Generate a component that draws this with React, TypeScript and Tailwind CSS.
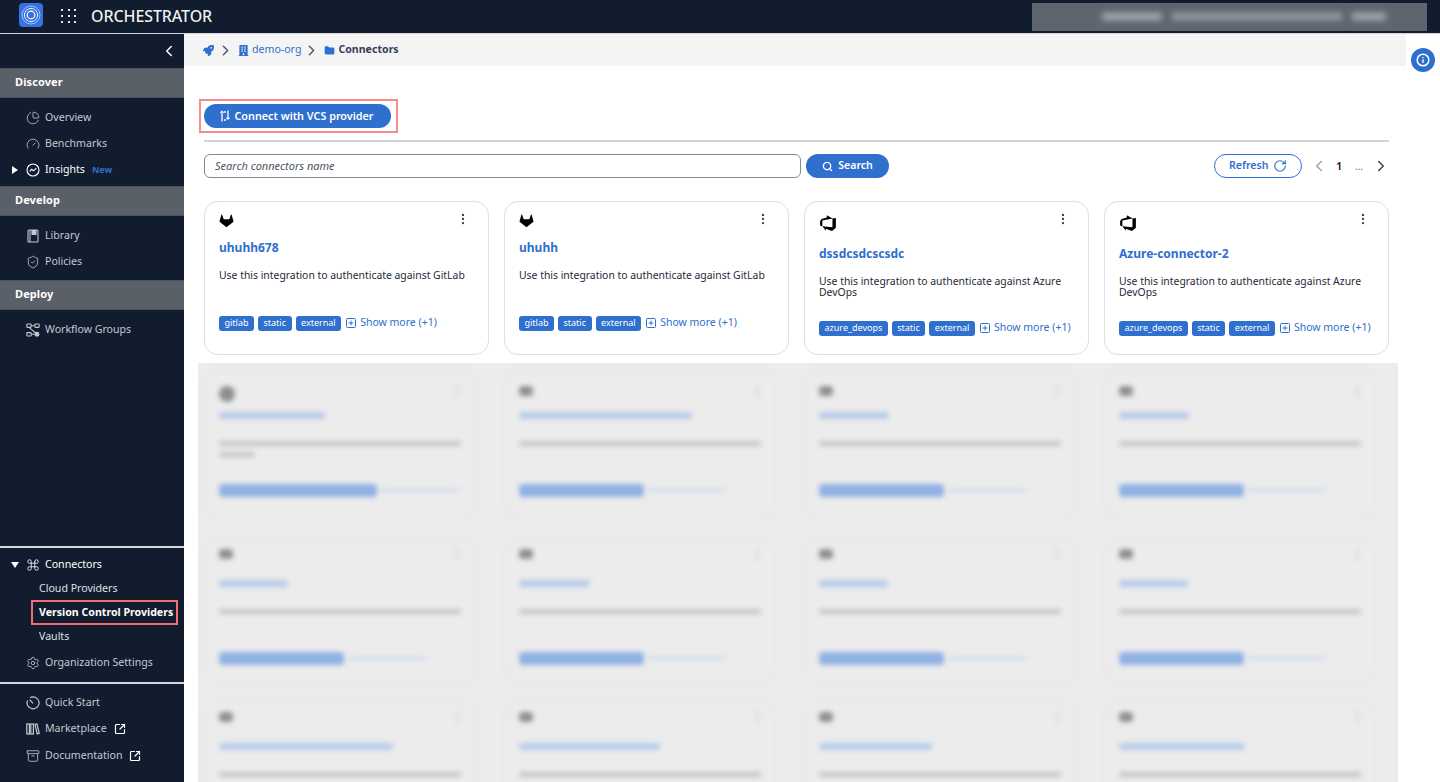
import type { ReactNode } from 'react'
import {
  Archive,
  ChartPie,
  ChevronLeft,
  ChevronRight,
  Command,
  EllipsisVertical,
  Folder,
  Gauge,
  Info,
  RotateCw,
  Search,
  Settings,
  ShieldCheck,
  SquareArrowOutUpRight,
  SquarePlus,
} from 'lucide-react'
import { FaBuilding, FaRocket } from 'react-icons/fa'
import { VscAzureDevops } from 'react-icons/vsc'

const BLUE = 'text-[#2f6fce]'

function Logo() {
  return (
    <div className="-mt-[3px] flex h-6 w-6 items-center justify-center rounded bg-[#3572e0]">
      <svg viewBox="0 0 24 24" className="h-6 w-6" fill="none" stroke="white">
        <circle cx="12" cy="12" r="9" strokeWidth="0.7" opacity="0.8" />
        <circle cx="12" cy="12" r="6.6" strokeWidth="0.9" />
        <circle cx="12" cy="12" r="3.8" strokeWidth="1.2" />
      </svg>
    </div>
  )
}

function GridDots() {
  return (
    <div className="-mt-[2px] grid w-[16px] grid-cols-3 gap-[4px]">
      {Array.from({ length: 9 }).map((_, i) => (
        <span key={i} className="h-[2px] w-[2px] bg-white/90" />
      ))}
    </div>
  )
}

// icons the packages don't have in this shape
function InsightsIcon() {
  return (
    <svg viewBox="0 0 14 14" className="h-[14px] w-[14px]" fill="none" stroke="currentColor" strokeWidth="1.1">
      <circle cx="7" cy="7" r="6" />
      <path d="M3.6 8.4 5.6 6.3 7.6 7.8 10.4 5.2" />
    </svg>
  )
}

function LibraryIcon() {
  return (
    <svg viewBox="0 0 14 14" className="h-[14px] w-[14px]" fill="none" stroke="currentColor" strokeWidth="1.1">
      <rect x="2" y="1" width="10" height="12" rx="1" />
      <path d="M4 1v12" />
      <path d="M6 1v4.5h4V1" fill="currentColor" />
    </svg>
  )
}

function WorkflowIcon() {
  return (
    <svg viewBox="0 0 14 14" className="h-[14px] w-[14px]" fill="none" stroke="currentColor" strokeWidth="1.1">
      <rect x="0.8" y="1" width="4.4" height="3.4" rx="0.8" />
      <rect x="8.8" y="1" width="4.4" height="3.4" rx="0.8" />
      <rect x="0.8" y="9.6" width="4.4" height="3.4" rx="0.8" />
      <circle cx="11" cy="11.3" r="1.9" fill="currentColor" />
      <path d="M5.2 2.7h3.6M3 4.4l6.6 5.6M5.2 11.3h3.9" />
    </svg>
  )
}

function QuickStartIcon() {
  return (
    <svg viewBox="0 0 14 14" className="h-[14px] w-[14px]" fill="none" stroke="currentColor" strokeWidth="1.2">
      <path d="M4.2 1.6A6 6 0 1 1 1.6 4.4" />
      <path d="M3.6 3.6 7 7.4" />
    </svg>
  )
}

function MarketplaceIcon() {
  return (
    <svg viewBox="0 0 14 14" className="h-[14px] w-[14px]" fill="none" stroke="currentColor" strokeWidth="1.2">
      <rect x="0.8" y="2" width="2.6" height="10" />
      <rect x="4.8" y="2" width="2.6" height="10" />
      <path d="M9 2.4 11 2l2.2 9.4-2 .5z" />
    </svg>
  )
}

function GitlabIcon() {
  return (
    <svg viewBox="0 0 16 15" className="h-[15px] w-[15px]" fill="black">
      <path d="M8 14.6.9 9.2a.8.8 0 0 1-.3-.9L2.5 1.4c.1-.4.6-.4.8 0l1.7 4.8h6l1.7-4.8c.2-.4.7-.4.8 0l1.9 6.9a.8.8 0 0 1-.3.9z" />
    </svg>
  )
}

function VcsIcon() {
  return (
    <svg viewBox="0 0 10 12" className="h-[12px] w-[10px]" fill="none" stroke="currentColor" strokeWidth="1.3">
      <path d="M2 3v8.5M8 .5V9" />
      <path d="M.4 1.9 2 .4l1.6 1.5" transform="translate(0 1)" />
      <path d="M6.4 7.6 8 9.1l1.6-1.5" />
      <path d="M4 2h2M4 10h2" />
    </svg>
  )
}

function TopBar() {
  return (
    <header className="flex h-[33px] items-center bg-[#111c2e] pl-[19px] pr-[13px]">
      <Logo />
      <div className="ml-[18px]">
        <GridDots />
      </div>
      <span className="-mt-[1px] ml-[14px] text-[16px] font-medium tracking-[-0.1px] text-white/95">ORCHESTRATOR</span>
      <div className="ml-auto flex h-[28px] w-[395px] items-center overflow-hidden bg-[#5f656f]">
        <div className="ml-[70px] flex items-center gap-[10px] blur-[3px]">
          <span className="h-[7px] w-[60px] bg-[#a8adb5]" />
          <span className="h-[7px] w-[170px] bg-[#9a9fa8]" />
          <span className="h-[7px] w-[34px] bg-[#a8adb5]" />
        </div>
      </div>
    </header>
  )
}

function SectionHeader({ label }: { label: string }) {
  return (
    <div className="flex h-[30px] items-center border-y border-[#4c525a] bg-[#5a6068] pb-[1px] pl-[15px] text-[11px] font-bold tracking-[0.1px] text-white">
      {label}
    </div>
  )
}

function NavItem({
  icon,
  label,
  trail,
  caret,
  strong,
  tall,
}: {
  icon: ReactNode
  label: string
  trail?: ReactNode
  caret?: 'right' | 'down'
  strong?: boolean
  tall?: boolean
}) {
  return (
    <div
      className={`relative flex items-center gap-[5px] pl-[26px] text-[10.6px] ${tall ? 'h-[27px]' : 'h-[26px]'} ${
        strong ? 'text-white' : 'text-[#c5c9cf]'
      }`}
    >
      {caret === 'right' && (
        <span className="absolute left-[12px] h-0 w-0 border-y-[4px] border-l-[6px] border-y-transparent border-l-white" />
      )}
      {caret === 'down' && (
        <span className="absolute left-[11px] h-0 w-0 border-x-[4px] border-t-[6px] border-x-transparent border-t-white" />
      )}
      <span className="flex w-[14px] shrink-0 justify-center">{icon}</span>
      <span>{label}</span>
      {trail}
    </div>
  )
}

function Sidebar() {
  const icon = { size: 14, strokeWidth: 1.4 }
  const external = <SquareArrowOutUpRight size={12} strokeWidth={2.4} className="ml-[2px] text-white" />
  return (
    <aside className="flex w-[184px] shrink-0 flex-col justify-between bg-[#111c2e]">
      <div>
        <div className="flex h-[34px] items-center justify-end pr-[6px]">
          <ChevronLeft size={18} className="text-white" />
        </div>
        <SectionHeader label="Discover" />
        <div className="pb-[3px] pt-[7px]">
          <NavItem icon={<ChartPie {...icon} />} label="Overview" />
          <NavItem icon={<Gauge {...icon} />} label="Benchmarks" />
          <NavItem
            icon={<InsightsIcon />}
            label="Insights"
            caret="right"
            strong
            trail={<span className="ml-[2px] text-[9px] font-bold text-[#2f6fce]">New</span>}
          />
        </div>
        <SectionHeader label="Develop" />
        <div className="pb-[5px] pt-[7px]">
          <NavItem icon={<LibraryIcon />} label="Library" />
          <NavItem icon={<ShieldCheck {...icon} />} label="Policies" />
        </div>
        <SectionHeader label="Deploy" />
        <div className="pt-[7px]">
          <NavItem icon={<WorkflowIcon />} label="Workflow Groups" />
        </div>
      </div>
      <div>
        <div className="border-t-2 border-[#d5d7da] pb-[6px] pt-[4px]">
          <NavItem icon={<Command {...icon} />} label="Connectors" caret="down" strong />
          <div className="ml-[31px] mr-[6px] flex flex-col text-[10.6px] text-[#dfe1e4]">
            <span className="flex h-[22px] items-center pl-[8px]">Cloud Providers</span>
            <span className="flex h-[25px] items-center whitespace-nowrap border-2 border-[#f26d75] pl-[6px] font-bold text-white">
              Version Control Providers
            </span>
            <span className="flex h-[23px] items-center pl-[8px]">Vaults</span>
          </div>
          <div className="mt-[2px]">
            <NavItem icon={<Settings {...icon} />} label="Organization Settings" />
          </div>
        </div>
        <div className="border-t-2 border-[#d5d7da] pb-[13px] pt-[6px]">
          <NavItem icon={<QuickStartIcon />} label="Quick Start" />
          <NavItem icon={<MarketplaceIcon />} label="Marketplace" trail={external} />
          <NavItem icon={<Archive {...icon} />} label="Documentation" trail={external} tall />
        </div>
      </div>
    </aside>
  )
}

function Breadcrumb() {
  return (
    <nav className="flex h-[32px] shrink-0 items-center bg-[#f4f4f4] pl-[19px] text-[10.6px]">
      <FaRocket size={11} className={BLUE} />
      <ChevronRight size={17} className="ml-[3px] text-[#4b5563]" />
      <FaBuilding size={11} className={`ml-[4px] ${BLUE}`} />
      <span className={`ml-[3px] ${BLUE}`}>demo-org</span>
      <ChevronRight size={17} className="ml-[2px] text-[#4b5563]" />
      <Folder size={11} fill="#2f6fce" strokeWidth={1} className={`ml-[4px] ${BLUE}`} />
      <span className="ml-[3px] font-bold text-[#374151]">Connectors</span>
    </nav>
  )
}

function Toolbar() {
  return (
    <div className="flex items-center">
      <div className="flex h-[24px] w-[597px] items-center rounded-[6px] border-[1.5px] border-[#7f8c9f] pl-[10px] text-[11px] italic text-[#4b5563]">
        Search connectors name
      </div>
      <button className="ml-[5px] flex h-[24px] w-[83px] items-center justify-center gap-[5px] rounded-full bg-[#2f6fce] text-[10.6px] font-semibold text-white">
        <Search size={11} strokeWidth={3} />
        Search
      </button>
      <button className={`ml-auto flex h-[24px] w-[88px] items-center justify-center gap-[5px] rounded-full border-[1.5px] border-[#2f6fce] text-[10.6px] font-semibold ${BLUE}`}>
        Refresh
        <RotateCw size={14} />
      </button>
      <div className="-mr-[1px] ml-[8px] flex items-center">
        <ChevronLeft size={18} className="text-[#9ca3af]" />
        <span className="ml-[8px] text-[10px] font-bold text-[#1f2937]">1</span>
        <span className="ml-[13px] text-[10px] text-[#6b7280]">...</span>
        <ChevronRight size={18} className="ml-[9px] text-[#374151]" />
      </div>
    </div>
  )
}

function Tag({ label }: { label: string }) {
  return <span className="flex h-[15px] items-center rounded-[3px] bg-[#2f6fce] px-[5.5px] text-[9px] text-white">{label}</span>
}

function ConnectorCard({ name, text, kind }: { name: string; text: string; kind: 'gitlab' | 'azure' }) {
  const azure = kind === 'azure'
  return (
    <div className="relative flex h-[154px] flex-col rounded-[14px] border border-[#dcdfe4] bg-white pl-[14px] pr-[12px]">
      <div className={azure ? 'mt-[12px] h-[20px]' : 'mt-[11px] h-[15px]'}>
        {azure ? <VscAzureDevops size={18} className="text-black" /> : <GitlabIcon />}
      </div>
      <EllipsisVertical size={14} className="absolute right-[18px] top-[10px] text-[#374151]" />
      <div className={`mt-[12px] text-[12px] font-bold leading-[16px] ${BLUE}`}>{name}</div>
      <p className="mt-[14px] text-[10.4px] leading-[11px] text-[#1f2937]">{text}</p>
      <div className={`absolute left-[14px] flex items-center gap-[4px] ${azure ? 'bottom-[18px]' : 'bottom-[23px]'}`}>
        <Tag label={azure ? 'azure_devops' : 'gitlab'} />
        <Tag label="static" />
        <Tag label="external" />
        <SquarePlus size={12} className={BLUE} />
        <span className={`-ml-[1px] text-[10.5px] ${BLUE}`}>Show more (+1)</span>
      </div>
    </div>
  )
}

type Blurred = { title: number; tags?: number; round?: boolean; lines?: number }

const blurredRows: Blurred[][] = [
  [{ title: 106, tags: 158, round: true, lines: 2 }, { title: 173 }, { title: 70 }, { title: 70 }],
  [{ title: 69 }, { title: 71 }, { title: 69 }, { title: 69 }],
  [{ title: 174 }, { title: 141 }, { title: 113 }, { title: 126 }],
]

function BlurredCard({ card, low }: { card: Blurred; low: boolean }) {
  return (
    <div className="relative h-[163px] blur-[2.5px]">
      <div className={`absolute inset-x-[6px] bottom-[6px] rounded-[14px] border border-[#e4e4e4] ${low ? 'top-[12px]' : 'top-[6px]'}`} />
      <div className={`absolute left-[21px] top-[23px] ${card.round ? 'h-[16px] w-[16px] rounded-full' : 'h-[10px] w-[14px] rounded-sm'} bg-[#8d8f92]`} />
      <div className="absolute right-[24px] top-[22px] h-[12px] w-[3px] bg-[#dcdcdc]" />
      <div
        className={`absolute left-[21px] h-[7px] rounded-sm bg-[#b7cbe9] ${low ? 'top-[54px]' : 'top-[49px]'}`}
        style={{ width: card.title }}
      />
      <div className={`absolute left-[21px] h-[5px] w-[242px] rounded-sm bg-[#c4c5c7] ${low ? 'top-[83px]' : 'top-[78px]'}`} />
      {card.lines === 2 && <div className="absolute left-[21px] top-[89px] h-[5px] w-[36px] rounded-sm bg-[#c4c5c7]" />}
      <div
        className={`absolute left-[21px] h-[13px] rounded-sm bg-[#8fb0e3] ${low ? 'top-[126px]' : 'top-[121px]'}`}
        style={{ width: card.tags ?? 125 }}
      />
      <div
        className={`absolute h-[4px] w-[78px] rounded-sm bg-[#d2dced] ${low ? 'top-[130px]' : 'top-[125px]'}`}
        style={{ left: 25 + (card.tags ?? 125) }}
      />
    </div>
  )
}

function BlurredGrid() {
  return (
    <div className="absolute bottom-0 left-[14px] top-[329px] w-[1200px] overflow-hidden bg-[#ececec]">
      <div className="grid grid-cols-4 gap-x-[15px] pr-[15px]">
        {blurredRows.map((row, r) =>
          row.map((card, c) => <BlurredCard key={`${r}-${c}`} card={card} low={r > 0} />),
        )}
      </div>
    </div>
  )
}

export default function App() {
  return (
    <div className="flex h-[782px] w-[1440px] flex-col overflow-hidden bg-white font-['Noto_Sans','Open_Sans',sans-serif]">
      <TopBar />
      <div className="flex min-h-0 flex-1 border-t border-[#d5d7da]">
        <Sidebar />
        <main className="relative flex w-[1222px] shrink-0 flex-col bg-white">
          <Breadcrumb />
          <div className="flex flex-1 flex-col pl-[20px] pr-[17px]">
            <div className="ml-[-5px] mt-[33px] w-[199px] border-2 border-[#f98b8f] p-[3px]">
              <button className="flex h-[24px] w-[187px] items-center justify-center gap-[4px] rounded-full bg-[#2f6fce] pr-[1px] text-[10.8px] font-semibold text-white">
                <VcsIcon />
                Connect with VCS provider
              </button>
            </div>
            <div className="mt-[7px] border-t-2 border-[#d4d5d7]" />
            <div className="mt-[12px]">
              <Toolbar />
            </div>
            <div className="mt-[23px] grid grid-cols-4 gap-x-[15px]">
              <ConnectorCard kind="gitlab" name="uhuhh678" text="Use this integration to authenticate against GitLab" />
              <ConnectorCard kind="gitlab" name="uhuhh" text="Use this integration to authenticate against GitLab" />
              <ConnectorCard kind="azure" name="dssdcsdcscsdc" text="Use this integration to authenticate against Azure DevOps" />
              <ConnectorCard kind="azure" name="Azure-connector-2" text="Use this integration to authenticate against Azure DevOps" />
            </div>
          </div>
          <BlurredGrid />
        </main>
        <div className="flex flex-1 justify-center pt-[14px] shadow-[-6px_0_10px_-6px_rgba(0,0,0,0.08)]">
          <span className="flex h-[24px] w-[24px] items-center justify-center rounded-full bg-[#2f6fce]">
            <Info size={14} strokeWidth={2.5} className="text-white" />
          </span>
        </div>
      </div>
    </div>
  )
}
